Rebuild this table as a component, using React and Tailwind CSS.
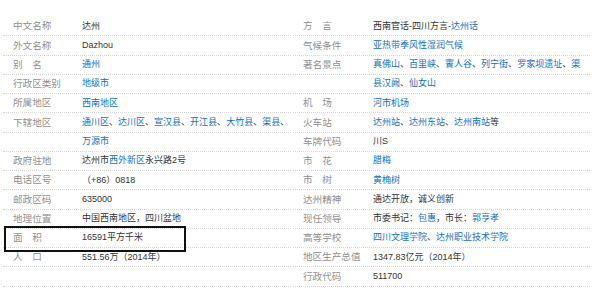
import React from "react";

// 链接文字
function L({ children }) {
  return <span className="text-[#136ec2]">{children}</span>;
}

const left = [
  ["中文名称", "达州"],
  ["外文名称", "Dazhou"],
  ["别　名", <L>通州</L>],
  ["行政区类别", <L>地级市</L>],
  ["所属地区", <L>西南地区</L>],
  [
    "下辖地区",
    <>
      <L>通川区</L>、<L>达川区</L>、<L>宣汉县</L>、<L>开江县</L>、<L>大竹县</L>、<L>渠县</L>、
    </>,
  ],
  ["", <L>万源市</L>],
  [
    "政府驻地",
    <>
      达州市<L>西外新区</L>永兴路2号
    </>,
  ],
  ["电话区号", "（+86）0818"],
  ["邮政区码", "635000"],
  ["地理位置", "中国西南地区，四川盆地"],
  ["面　积", "16591平方千米", true],
  ["人　口", "551.56万（2014年）"],
  ["", ""],
];

const right = [
  [
    "方　言",
    <>
      西南官话-四川方言-<L>达州话</L>
    </>,
  ],
  ["气候条件", <L>亚热带季风性湿润气候</L>],
  [
    "著名景点",
    <>
      <L>真佛山</L>、<L>百里峡</L>、<L>賨人谷</L>、<L>列宁街</L>、<L>罗家坝遗址</L>、<L>渠</L>
    </>,
  ],
  [
    "",
    <>
      <L>县汉阙</L>、<L>仙女山</L>
    </>,
  ],
  ["机　场", <L>河市机场</L>],
  [
    "火车站",
    <>
      <L>达州站</L>、<L>达州东站</L>、<L>达州南站</L>等
    </>,
  ],
  ["车牌代码", "川S"],
  ["市　花", <L>腊梅</L>],
  ["市　树", <L>黄桷树</L>],
  ["达州精神", "通达开放，诚义创新"],
  [
    "现任领导",
    <>
      市委书记：<L>包惠</L>，市长：<L>郭亨孝</L>
    </>,
  ],
  [
    "高等学校",
    <>
      <L>四川文理学院</L>、<L>达州职业技术学院</L>
    </>,
  ],
  ["地区生产总值", "1347.83亿元（2014年）"],
  ["行政代码", "511700"],
];

function Row({ label, value, boxed, labelW }) {
  return (
    <div className="relative flex h-[19.25px] items-center border-b border-dotted border-[#d6d6d6] pl-[10px]">
      <div className={`${labelW} shrink-0 whitespace-nowrap text-[9.6px] text-[#8f8f8f]`}>{label}</div>
      <div className="whitespace-nowrap text-[9px] text-[#333]">{value}</div>
      {boxed && (
        <div className="absolute left-[1px] top-[-3px] h-[26px] w-[182px] border-2 border-[#111]" />
      )}
    </div>
  );
}

export default function App() {
  return (
    <div
      className="flex h-[294px] w-[600px] bg-white pt-[17px] pl-[3px] leading-none"
      style={{ fontFamily: '"Liberation Sans", Arial, "Noto Sans CJK SC", sans-serif' }}
    >
      <div className="w-[288px]">
        {left.map(([k, v, b], i) => (
          <Row key={i} label={k} value={v} boxed={b} labelW="w-[69px]" />
        ))}
      </div>
      <div className="ml-[2px] w-[297px]">
        {right.map(([k, v], i) => (
          <Row key={i} label={k} value={v} labelW="w-[70px]" />
        ))}
      </div>
    </div>
  );
}
